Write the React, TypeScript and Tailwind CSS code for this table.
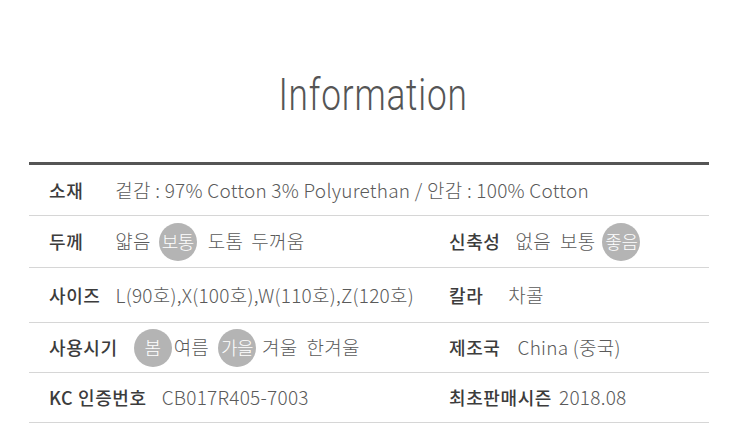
import React from "react";

type Word = { text: string; on?: boolean; cls?: string };

const font = "font-['Noto_Sans_CJK_KR','Noto_Sans',sans-serif]";

const Chip = ({ w }: { w: Word }) =>
  w.on ? (
    <span
      className={`inline-flex items-center justify-center w-[38px] h-[38px] rounded-full bg-[#b4b4b4] text-white text-[18px] tracking-[-0.5px] ${w.cls ?? ""}`}
    >
      {w.text}
    </span>
  ) : (
    <span className={w.cls ?? ""}>{w.text}</span>
  );

const Cell = ({
  label,
  words,
  gap,
  className,
}: {
  label: string;
  words: Word[];
  gap: string;
  className?: string;
}) => (
  <div className={`flex items-center pl-5 ${className ?? ""}`}>
    <span className="font-medium text-[#3c3c3c] text-[18px] tracking-[0.6px] whitespace-nowrap">
      {label}
    </span>
    <div
      className={`flex items-center text-[19px] font-light tracking-[0.25px] text-[#5a5a5a] whitespace-nowrap ${gap}`}
    >
      {words.map((w, i) => (
        <Chip key={i} w={w} />
      ))}
    </div>
  </div>
);

const App = () => {
  return (
    <div className={`w-[740px] h-[440px] bg-white overflow-hidden ${font}`}>
      <div className="mx-[29px] w-[680px]">
        <h1 className="mt-[71px] h-[48px] pl-[10px] flex justify-center items-center text-[44px] leading-[48px] font-['Roboto',sans-serif] font-light text-[#555] tracking-[1px] scale-x-[0.8]">
          Information
        </h1>
        <div className="mt-[43px] border-t-[3px] border-[#555]">
          <div className="h-[51px] border-b border-[#d6d6d6] flex">
            <Cell
              label="소재"
              gap="ml-[32px]"
              words={[
                {
                  text: "겉감 : 97% Cotton 3% Polyurethan / 안감 : 100% Cotton",
                },
              ]}
            />
          </div>
          <div className="h-[52px] border-b border-[#d6d6d6] flex">
            <Cell
              className="w-[400px]"
              label="두께"
              gap="ml-[32px]"
              words={[
                { text: "얇음" },
                { text: "보통", on: true, cls: "ml-[8px]" },
                { text: "도톰", cls: "ml-[11px]" },
                { text: "두꺼움", cls: "ml-[8px]" },
              ]}
            />
            <Cell
              label="신축성"
              gap="ml-[15px]"
              words={[
                { text: "없음" },
                { text: "보통", cls: "ml-[9px]" },
                { text: "좋음", on: true, cls: "ml-[7px]" },
              ]}
            />
          </div>
          <div className="h-[55px] border-b border-[#d6d6d6] flex">
            <Cell
              className="w-[400px]"
              label="사이즈"
              gap="ml-[15px]"
              words={[{ text: "L(90호),X(100호),W(110호),Z(120호)" }]}
            />
            <Cell label="칼라" gap="ml-[25px]" words={[{ text: "차콜" }]} />
          </div>
          <div className="h-[50px] border-b border-[#d6d6d6] flex">
            <Cell
              className="w-[400px]"
              label="사용시기"
              gap="ml-[16px]"
              words={[
                { text: "봄", on: true },
                { text: "여름", cls: "ml-[2px]" },
                { text: "가을", on: true, cls: "ml-[9px]" },
                { text: "겨울", cls: "ml-[6px]" },
                { text: "한겨울", cls: "ml-[9px]" },
              ]}
            />
            <Cell
              label="제조국"
              gap="ml-[17px]"
              words={[{ text: "China (중국)" }]}
            />
          </div>
          <div className="h-[50px] border-b border-[#d6d6d6] flex">
            <Cell
              className="w-[400px]"
              label="KC 인증번호"
              gap="ml-[15px]"
              words={[{ text: "CB017R405-7003" }]}
            />
            <Cell
              label="최초판매시즌"
              gap="ml-[7px]"
              words={[{ text: "2018.08" }]}
            />
          </div>
        </div>
      </div>
    </div>
  );
};

export default App;
